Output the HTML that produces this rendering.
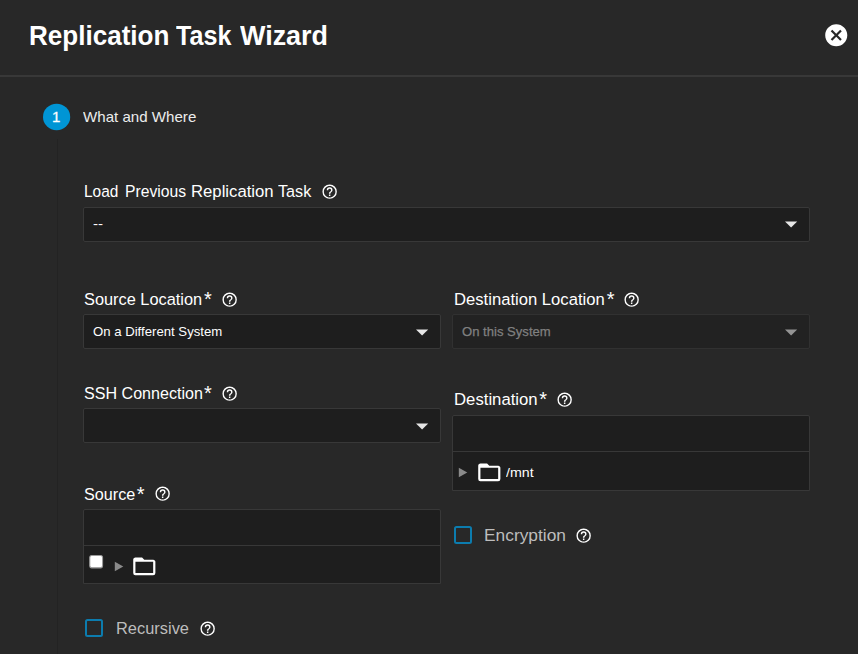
<!DOCTYPE html>
<html lang="en"><head><meta charset="utf-8"><title>Replication Task Wizard</title>
<style>
html,body{margin:0;padding:0}
body{width:858px;height:654px;overflow:hidden;background:#282828;position:relative;font-family:"Liberation Sans",sans-serif}
.t{z-index:2;position:absolute;line-height:1;white-space:nowrap;display:block;transform-origin:0 0}
.i{z-index:2;position:absolute;display:block}
.hr{position:absolute;left:0;top:75px;width:858px;height:2px;background:#383838}
.vl{position:absolute;left:57px;top:139px;width:1px;height:520px;background:#232323}
.box{position:absolute;box-sizing:border-box;background:#1e1e1e;border:1px solid #383838;border-radius:2px}
.box.dis{background:#222;border-color:#313131}
.box.sq{border-radius:2px 2px 0 0}
.dv{position:absolute;height:1px;background:#383838}
.ov{position:absolute;left:0;top:0;display:block;pointer-events:none;z-index:1}
.chk{position:absolute;box-sizing:border-box;width:18px;height:18px;border:2px solid #0c7cae;border-radius:2.5px}
</style></head>
<body>
<span class="t" id="t0" style="left:28.51px;top:20.77px;font-size:28.5px;color:#fff;font-weight:700;transform:scaleX(0.9138);">Replication</span>
<span class="t" id="t1" style="left:175.81px;top:20.77px;font-size:28.5px;color:#fff;font-weight:700;transform:scaleX(0.8810);">Task</span>
<span class="t" id="t2" style="left:240.36px;top:20.77px;font-size:28.5px;color:#fff;font-weight:700;transform:scaleX(0.9441);">Wizard</span>
<svg class="i" style="left:822.90px;top:21.85px" width="26.5" height="26.5" viewBox="0 0 24 24" fill="#fff"><path d="M12,2C17.53,2 22,6.47 22,12C22,17.53 17.53,22 12,22C6.47,22 2,17.53 2,12C2,6.47 6.47,2 12,2M15.59,7L12,10.59L8.41,7L7,8.41L10.59,12L7,15.59L8.41,17L12,13.41L15.59,17L17,15.59L13.41,12L17,8.41L15.59,7Z"/></svg>
<div class="hr"></div>
<span class="t" id="t3" style="left:52.10px;top:109.40px;font-size:15px;color:#fff;-webkit-text-stroke:0.3px #fff;">1</span>
<span class="t" id="t4" style="left:83.41px;top:110.44px;font-size:14.6px;color:#ececec;transform:scaleX(1.0345);">What and Where</span>
<div class="vl"></div>
<span class="t" id="t5" style="left:84.24px;top:183.24px;font-size:17.2px;color:#fff;transform:scaleX(0.8974);">Load</span>
<span class="t" id="t6" style="left:125.04px;top:183.24px;font-size:17.2px;color:#fff;transform:scaleX(0.9119);">Previous</span>
<span class="t" id="t7" style="left:190.83px;top:183.24px;font-size:17.2px;color:#fff;transform:scaleX(0.9714);">Replication</span>
<span class="t" id="t8" style="left:278.39px;top:183.24px;font-size:17.2px;color:#fff;transform:scaleX(0.9417);">Task</span>
<svg class="i" style="left:321.25px;top:182.95px" width="17.3" height="17.3" viewBox="0 0 24 24" fill="#fff"><path d="M11,18H13V16H11V18M12,2A10,10 0 0,0 2,12A10,10 0 0,0 12,22A10,10 0 0,0 22,12A10,10 0 0,0 12,2M12,20C7.59,20 4,16.41 4,12C4,7.59 7.59,4 12,4C16.41,4 20,7.59 20,12C20,16.41 16.41,20 12,20M12,6A4,4 0 0,0 8,10H10A2,2 0 0,1 12,8A2,2 0 0,1 14,10C14,12 11,11.75 11,15H13C13,12.75 16,12.5 16,10A4,4 0 0,0 12,6Z"/></svg>
<div class="box" style="left:83px;top:207px;width:727px;height:35px"></div>
<span class="t" id="t9" style="left:93.00px;top:217.17px;font-size:13.5px;color:#fff;transform:scaleX(1.1222);">--</span>
<span class="t" id="t10" style="left:84.02px;top:291.04px;font-size:17.2px;color:#fff;transform:scaleX(0.9508);">Source Location</span>
<span class="t" id="t11" style="left:204.00px;top:288.97px;font-size:20px;color:#fff;">*</span>
<svg class="i" style="left:221.25px;top:290.95px" width="17.3" height="17.3" viewBox="0 0 24 24" fill="#fff"><path d="M11,18H13V16H11V18M12,2A10,10 0 0,0 2,12A10,10 0 0,0 12,22A10,10 0 0,0 22,12A10,10 0 0,0 12,2M12,20C7.59,20 4,16.41 4,12C4,7.59 7.59,4 12,4C16.41,4 20,7.59 20,12C20,16.41 16.41,20 12,20M12,6A4,4 0 0,0 8,10H10A2,2 0 0,1 12,8A2,2 0 0,1 14,10C14,12 11,11.75 11,15H13C13,12.75 16,12.5 16,10A4,4 0 0,0 12,6Z"/></svg>
<div class="box" style="left:83px;top:314px;width:358px;height:35px"></div>
<span class="t" id="t12" style="left:92.60px;top:325.27px;font-size:13.5px;color:#fff;transform:scaleX(0.9750);">On a Different System</span>
<span class="t" id="t13" style="left:454.02px;top:291.04px;font-size:17.2px;color:#fff;transform:scaleX(0.9677);">Destination Location</span>
<span class="t" id="t14" style="left:606.80px;top:288.97px;font-size:20px;color:#fff;">*</span>
<svg class="i" style="left:623.25px;top:290.95px" width="17.3" height="17.3" viewBox="0 0 24 24" fill="#fff"><path d="M11,18H13V16H11V18M12,2A10,10 0 0,0 2,12A10,10 0 0,0 12,22A10,10 0 0,0 22,12A10,10 0 0,0 12,2M12,20C7.59,20 4,16.41 4,12C4,7.59 7.59,4 12,4C16.41,4 20,7.59 20,12C20,16.41 16.41,20 12,20M12,6A4,4 0 0,0 8,10H10A2,2 0 0,1 12,8A2,2 0 0,1 14,10C14,12 11,11.75 11,15H13C13,12.75 16,12.5 16,10A4,4 0 0,0 12,6Z"/></svg>
<div class="box dis" style="left:452px;top:314px;width:358px;height:35px"></div>
<span class="t" id="t15" style="left:461.61px;top:325.27px;font-size:13.5px;color:#808080;transform:scaleX(0.9692);-webkit-text-stroke:0.25px #808080;">On this System</span>
<span class="t" id="t16" style="left:84.03px;top:385.14px;font-size:17.2px;color:#fff;transform:scaleX(0.9357);">SSH Connection</span>
<span class="t" id="t17" style="left:204.00px;top:383.07px;font-size:20px;color:#fff;">*</span>
<svg class="i" style="left:221.25px;top:384.95px" width="17.3" height="17.3" viewBox="0 0 24 24" fill="#fff"><path d="M11,18H13V16H11V18M12,2A10,10 0 0,0 2,12A10,10 0 0,0 12,22A10,10 0 0,0 22,12A10,10 0 0,0 12,2M12,20C7.59,20 4,16.41 4,12C4,7.59 7.59,4 12,4C16.41,4 20,7.59 20,12C20,16.41 16.41,20 12,20M12,6A4,4 0 0,0 8,10H10A2,2 0 0,1 12,8A2,2 0 0,1 14,10C14,12 11,11.75 11,15H13C13,12.75 16,12.5 16,10A4,4 0 0,0 12,6Z"/></svg>
<div class="box" style="left:83px;top:408px;width:358px;height:35px"></div>
<span class="t" id="t18" style="left:454.01px;top:391.04px;font-size:17.2px;color:#fff;transform:scaleX(0.9729);">Destination</span>
<span class="t" id="t19" style="left:539.20px;top:388.97px;font-size:20px;color:#fff;">*</span>
<svg class="i" style="left:556.25px;top:390.95px" width="17.3" height="17.3" viewBox="0 0 24 24" fill="#fff"><path d="M11,18H13V16H11V18M12,2A10,10 0 0,0 2,12A10,10 0 0,0 12,22A10,10 0 0,0 22,12A10,10 0 0,0 12,2M12,20C7.59,20 4,16.41 4,12C4,7.59 7.59,4 12,4C16.41,4 20,7.59 20,12C20,16.41 16.41,20 12,20M12,6A4,4 0 0,0 8,10H10A2,2 0 0,1 12,8A2,2 0 0,1 14,10C14,12 11,11.75 11,15H13C13,12.75 16,12.5 16,10A4,4 0 0,0 12,6Z"/></svg>
<div class="box sq" style="left:452px;top:415px;width:358px;height:76px"></div>
<div class="dv" style="left:453px;top:451px;width:356px"></div>
<svg class="i" style="left:475.65px;top:459.10px" width="26.6" height="26.6" viewBox="0 0 24 24" fill="#fff"><path d="M20,18H4V8H20M20,6H12L10,4H4C2.89,4 2,4.89 2,6V18A2,2 0 0,0 4,20H20A2,2 0 0,0 22,18V8C22,6.89 21.1,6 20,6Z"/></svg>
<span class="t" id="t20" style="left:505.60px;top:465.87px;font-size:13.5px;color:#fff;transform:scaleX(1.0527);">/mnt</span>
<span class="t" id="t21" style="left:84.03px;top:486.04px;font-size:17.2px;color:#fff;transform:scaleX(0.9407);">Source</span>
<span class="t" id="t22" style="left:136.80px;top:483.97px;font-size:20px;color:#fff;">*</span>
<svg class="i" style="left:154.25px;top:484.95px" width="17.3" height="17.3" viewBox="0 0 24 24" fill="#fff"><path d="M11,18H13V16H11V18M12,2A10,10 0 0,0 2,12A10,10 0 0,0 12,22A10,10 0 0,0 22,12A10,10 0 0,0 12,2M12,20C7.59,20 4,16.41 4,12C4,7.59 7.59,4 12,4C16.41,4 20,7.59 20,12C20,16.41 16.41,20 12,20M12,6A4,4 0 0,0 8,10H10A2,2 0 0,1 12,8A2,2 0 0,1 14,10C14,12 11,11.75 11,15H13C13,12.75 16,12.5 16,10A4,4 0 0,0 12,6Z"/></svg>
<div class="box sq" style="left:83px;top:509px;width:358px;height:75px"></div>
<div class="dv" style="left:84px;top:545px;width:356px"></div>
<svg class="i" style="left:130.65px;top:553.10px" width="26.6" height="26.6" viewBox="0 0 24 24" fill="#fff"><path d="M20,18H4V8H20M20,6H12L10,4H4C2.89,4 2,4.89 2,6V18A2,2 0 0,0 4,20H20A2,2 0 0,0 22,18V8C22,6.89 21.1,6 20,6Z"/></svg>
<div class="chk" style="left:454px;top:526px"></div>
<span class="t" id="t23" style="left:484.39px;top:526.94px;font-size:17.2px;color:#bdbdbd;transform:scaleX(1.0089);">Encryption</span>
<svg class="i" style="left:575.25px;top:526.95px" width="17.3" height="17.3" viewBox="0 0 24 24" fill="#fff"><path d="M11,18H13V16H11V18M12,2A10,10 0 0,0 2,12A10,10 0 0,0 12,22A10,10 0 0,0 22,12A10,10 0 0,0 12,2M12,20C7.59,20 4,16.41 4,12C4,7.59 7.59,4 12,4C16.41,4 20,7.59 20,12C20,16.41 16.41,20 12,20M12,6A4,4 0 0,0 8,10H10A2,2 0 0,1 12,8A2,2 0 0,1 14,10C14,12 11,11.75 11,15H13C13,12.75 16,12.5 16,10A4,4 0 0,0 12,6Z"/></svg>
<div class="chk" style="left:85px;top:619px"></div>
<span class="t" id="t24" style="left:116.22px;top:620.14px;font-size:17.2px;color:#bdbdbd;transform:scaleX(0.9553);">Recursive</span>
<svg class="i" style="left:199.25px;top:619.95px" width="17.3" height="17.3" viewBox="0 0 24 24" fill="#fff"><path d="M11,18H13V16H11V18M12,2A10,10 0 0,0 2,12A10,10 0 0,0 12,22A10,10 0 0,0 22,12A10,10 0 0,0 12,2M12,20C7.59,20 4,16.41 4,12C4,7.59 7.59,4 12,4C16.41,4 20,7.59 20,12C20,16.41 16.41,20 12,20M12,6A4,4 0 0,0 8,10H10A2,2 0 0,1 12,8A2,2 0 0,1 14,10C14,12 11,11.75 11,15H13C13,12.75 16,12.5 16,10A4,4 0 0,0 12,6Z"/></svg>
<svg class="ov" width="858" height="654" viewBox="0 0 858 654"><ellipse cx="56.6" cy="116.95" rx="13.6" ry="13.2" fill="#0095d5"/><polygon points="785.00,221.50 797.20,221.50 791.10,227.40" fill="#e6e6e6"/><polygon points="416.00,329.50 428.20,329.50 422.10,335.40" fill="#e6e6e6"/><polygon points="785.00,329.50 797.20,329.50 791.10,335.40" fill="#949494"/><polygon points="416.00,423.50 428.20,423.50 422.10,429.40" fill="#e6e6e6"/><polygon points="458.80,467.80 458.80,477.20 467.30,472.50" fill="#8a8a8a"/><rect x="89.75" y="555.55" width="12.8" height="12.3" rx="2" fill="#fff" stroke="#9a9a9a" stroke-width="1.1"/><polygon points="114.80,561.80 114.80,571.20 123.30,566.50" fill="#8a8a8a"/></svg>
</body></html>
